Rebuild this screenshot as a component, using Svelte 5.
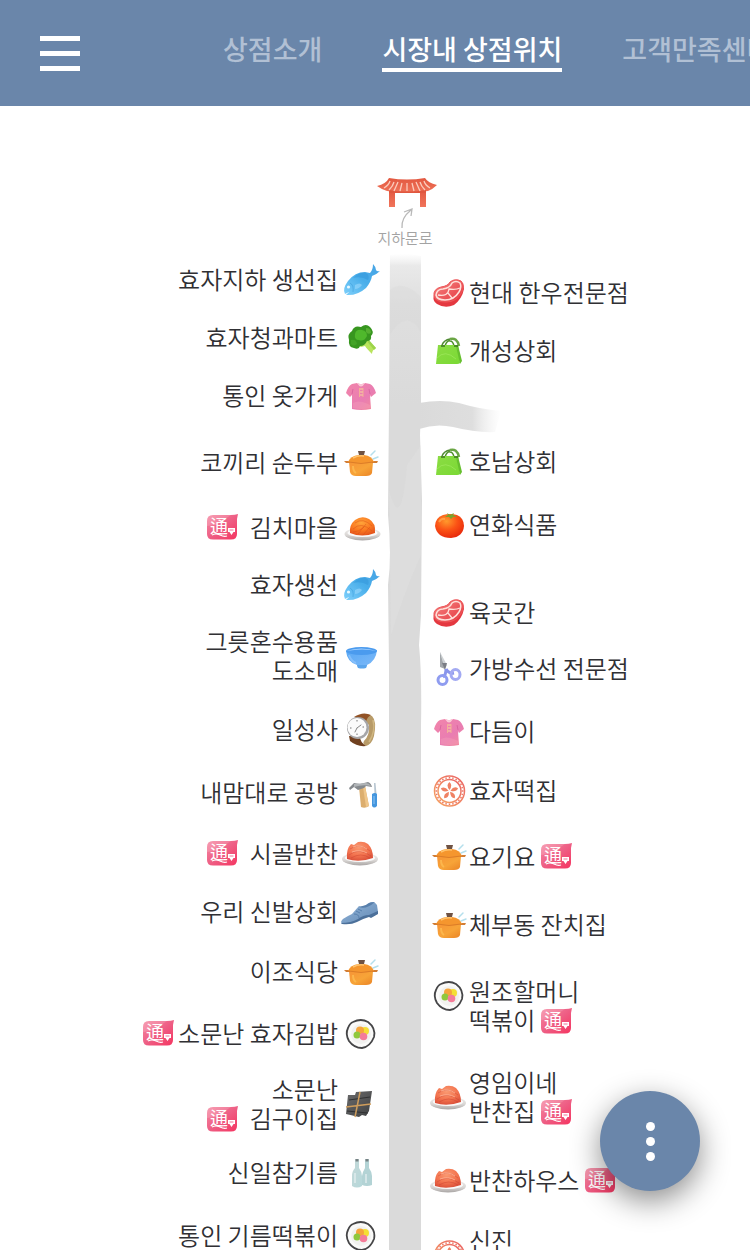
<script>
  const tabs = [
    { label: '상점소개', active: false },
    { label: '시장내 상점위치', active: true },
    { label: '고객만족센터', active: false }
  ];

  // y is the centre of each shop on the map, measured from the map's top edge
  const west = [
    { y: 174, icon: 'fish', lines: ['효자지하 생선집'] },
    { y: 232, icon: 'broccoli', lines: ['효자청과마트'] },
    { y: 290, icon: 'shirt', lines: ['통인 옷가게'] },
    { y: 357, icon: 'pot', lines: ['코끼리 순두부'] },
    { y: 422, icon: 'kimchi', lines: ['김치마을'], coin: true },
    { y: 479, icon: 'fish', lines: ['효자생선'] },
    { y: 551, icon: 'bowl', lines: ['그릇혼수용품', '도소매'] },
    { y: 624, icon: 'watch', lines: ['일성사'] },
    { y: 687, icon: 'tools', lines: ['내맘대로 공방'] },
    { y: 748, icon: 'banchan', lines: ['시골반찬'], coin: true },
    { y: 806, icon: 'shoe', lines: ['우리 신발상회'] },
    { y: 866, icon: 'pot', lines: ['이조식당'] },
    { y: 928, icon: 'gimbap', lines: ['소문난 효자김밥'], coin: true, tight: true },
    { y: 999, icon: 'seaweed', lines: ['소문난', '김구이집'], coin: true },
    { y: 1067, icon: 'bottles', lines: ['신일참기름'] },
    { y: 1130, icon: 'gimbap', lines: ['통인 기름떡볶이'] }
  ];

  const east = [
    { y: 187, icon: 'meat', lines: ['현대 한우전문점'] },
    { y: 245, icon: 'bag', lines: ['개성상회'] },
    { y: 356, icon: 'bag', lines: ['호남상회'] },
    { y: 419, icon: 'tomato', lines: ['연화식품'] },
    { y: 507, icon: 'meat', lines: ['육곳간'] },
    { y: 563, icon: 'scissors', lines: ['가방수선 전문점'] },
    { y: 626, icon: 'shirt', lines: ['다듬이'] },
    { y: 685, icon: 'ricecake', lines: ['효자떡집'] },
    { y: 751, icon: 'pot', lines: ['요기요'], coin: true },
    { y: 819, icon: 'pot', lines: ['체부동 잔치집'] },
    { y: 901, icon: 'gimbap', lines: ['원조할머니', '떡볶이'], coin: true, top: true },
    { y: 992, icon: 'banchan', lines: ['영임이네', '반찬집'], coin: true },
    { y: 1075, icon: 'banchan', lines: ['반찬하우스'], coin: true },
    { y: 1150, icon: 'ricecake', lines: ['신진', '떡집'] }
  ];

  const stitches = Array.from({ length: 24 }, (_, i) => i * 15);
  const petals = [0, 72, 144, 216, 288];
</script>

{#snippet coinBadge()}
  <svg class="coin" viewBox="0 0 31 26" role="img" aria-label="통인시장 엽전 가맹점">
    <path d="M6 1H24Q28 1 31 0L30 5V20Q30 25.500 24 25.500H6Q0 25.500 0 20V7Q0 1 6 1Z" fill="url(#g-coin)" />
    <path d="M0 12V7Q0 1 6 1H24L9 11Z" fill="#fff" opacity=".16" />
    <text x="3" y="19" class="coin-text">通</text>
    <path d="M21 14H28V18H26.500L24.500 21L22.500 18H21Z" fill="#fff" />
    <path d="M22.500 16H26.500" stroke="#ef4f7c" stroke-width=".8" />
    <path d="M5 21Q9 19 13 21T20 22" fill="none" stroke="#fff" stroke-width="1.200" />
  </svg>
{/snippet}

{#snippet shop(item)}
  <li class="pin" class:tight={item.tight} class:top={item.top} style:top="{item.y}px">
    <svg class="icon" viewBox="0 0 40 40" aria-hidden="true"><use href="#i-{item.icon}" /></svg>
    <span class="name">
      {#each item.lines as line, i}
        <span class="line">
          <span>{line}</span>
          {#if item.coin && i === item.lines.length - 1}{@render coinBadge()}{/if}
        </span>
      {/each}
    </span>
  </li>
{/snippet}

<svg class="defs" aria-hidden="true">
  <defs>
    <linearGradient id="g-coin" x1="0" y1="0" x2="1" y2="1"><stop stop-color="#f68aa3" /><stop offset=".5" stop-color="#ee5f85" /><stop offset="1" stop-color="#f5335f" /></linearGradient>
    <linearGradient id="g-gate" x1="0" y1="0" x2="0" y2="1"><stop stop-color="#e2573f" /><stop offset="1" stop-color="#f0745a" /></linearGradient>
    <linearGradient id="g-fish" x1="1" y1="0" x2="0" y2="1"><stop stop-color="#48a3e4" /><stop offset=".5" stop-color="#49aeea" /><stop offset="1" stop-color="#7fd0fb" /></linearGradient>
    <linearGradient id="g-shirt" x1="0" y1="0" x2="1" y2="1"><stop stop-color="#f285aa" /><stop offset=".6" stop-color="#e97db2" /><stop offset="1" stop-color="#f58c98" /></linearGradient>
    <linearGradient id="g-pot" x1="0" y1="0" x2="1" y2="1"><stop stop-color="#f79436" /><stop offset=".55" stop-color="#f7a438" /><stop offset="1" stop-color="#ea8325" /></linearGradient>
    <radialGradient id="g-kimchi" cx=".45" cy=".3" r=".7"><stop stop-color="#ffa53a" /><stop offset=".6" stop-color="#fa7920" /><stop offset="1" stop-color="#e5561c" /></radialGradient>
    <radialGradient id="g-banchan" cx=".45" cy=".3" r=".7"><stop stop-color="#fa9a72" /><stop offset=".6" stop-color="#f3744f" /><stop offset="1" stop-color="#dc533b" /></radialGradient>
    <linearGradient id="g-plate" x1="0" y1="0" x2="0" y2="1"><stop stop-color="#f4f2f0" /><stop offset=".6" stop-color="#d9d6d4" /><stop offset="1" stop-color="#a9a5a4" /></linearGradient>
    <linearGradient id="g-bowl" x1="0" y1="0" x2="1" y2="1"><stop stop-color="#5aa9f5" /><stop offset="1" stop-color="#7db9f8" /></linearGradient>
    <radialGradient id="g-tomato" cx=".4" cy=".3" r=".75"><stop stop-color="#ff9a2c" /><stop offset=".5" stop-color="#fb5215" /><stop offset="1" stop-color="#e6260b" /></radialGradient>
    <linearGradient id="g-bag" x1="0" y1="0" x2="1" y2="1"><stop stop-color="#8cdc44" /><stop offset="1" stop-color="#7ad934" /></linearGradient>
    <linearGradient id="g-meat" x1="0" y1="0" x2="1" y2="1"><stop stop-color="#f58a86" /><stop offset="1" stop-color="#e5343d" /></linearGradient>
    <linearGradient id="g-rice" x1="0" y1="1" x2="1" y2="0"><stop stop-color="#f6a560" /><stop offset="1" stop-color="#ea6266" /></linearGradient>
    <linearGradient id="g-shoe" x1="0" y1="0" x2="1" y2="1"><stop stop-color="#93b6da" /><stop offset="1" stop-color="#6389b4" /></linearGradient>
    <linearGradient id="g-bottle" x1="0" y1="0" x2="1" y2="1"><stop stop-color="#c4d8d8" /><stop offset="1" stop-color="#b6d8da" /></linearGradient>
    <linearGradient id="g-black" x1="0" y1="0" x2="1" y2="1"><stop stop-color="#6b6b6c" /><stop offset="1" stop-color="#3f4041" /></linearGradient>
    <linearGradient id="g-road" x1="0" y1="0" x2="0" y2="1"><stop stop-color="#eee" stop-opacity="0" /><stop offset=".012" stop-color="#e9e9e9" /><stop offset=".05" stop-color="#dfdfdf" /><stop offset=".15" stop-color="#dadada" /><stop offset="1" stop-color="#dadada" /></linearGradient>
    <linearGradient id="g-branch" x1="0" y1="0" x2="1" y2="0"><stop stop-color="#dadada" /><stop offset=".65" stop-color="#dedede" /><stop offset="1" stop-color="#ececec" stop-opacity="0" /></linearGradient>
  </defs>

  <symbol id="i-fish" viewBox="0 0 40 40">
    <path d="M4 34Q1 29 7 21Q14 12 24 12L29 13Q32 10 32 4Q35 7 35 10Q36 12 39 11Q35 15 31 16Q30 22 25 28Q16 36 5 35L8 32Z" fill="url(#g-fish)" />
    <path d="M12 18Q18 12 25 13Q29 15 27 20Q20 16 12 18Z" fill="#2f93d8" opacity=".45" />
    <path d="M9 23Q13 25 12 32" fill="none" stroke="#2d8fd3" stroke-width="1" opacity=".4" />
    <path d="M14 25Q19 22 21 25Q18 29 14 29Z" fill="#a9e0ff" opacity=".5" />
    <circle cx="7.500" cy="27" r="1.600" fill="#e9f9ff" />
  </symbol>

  <symbol id="i-broccoli" viewBox="0 0 40 40">
    <path d="M18 24L24 19Q27 18 28 23L35 30Q31 32 31 36Q26 31 24 28L20 29Q16 28 18 24Z" fill="#b9e45d" />
    <path d="M25 22L33 32L35 30L28 22Z" fill="#9cd44a" />
    <path d="M8 22Q6 16 11 13Q13 7 20 9Q25 5 29 9Q34 14 30 18Q31 23 26 23Q24 28 19 28Q18 32 13 30Q7 29 8 22Z" fill="#37961f" />
    <path d="M14 16Q15 11 21 12Q26 13 26 18Q23 24 18 22Q13 22 14 16Z" fill="#4fb82c" />
    <path d="M25 10Q30 10 30 15Q27 17 25 14Z" fill="#56b032" /><path d="M10 22Q15 21 16 26Q12 29 10 26Z" fill="#43a327" />
  </symbol>

  <symbol id="i-shirt" viewBox="0 0 40 40">
    <path d="M11 8L16 7Q20 10 24 7L29 8Q33 10 35 17L30 21L29 19L30 33Q20 35 11 33L11 19L9 21L5 17Q7 10 11 8Z" fill="url(#g-shirt)" />
    <path d="M16 7Q20 14 24 7L22 7Q20 10 18 7Z" fill="#fbc8d6" />
    <path d="M11 18L12 13M29 18L28 13" stroke="#d55f9b" stroke-width=".8" />
    <path d="M19 13H22M19 16H22M19 19H22" stroke="#f8d4a0" stroke-width="1" /><path d="M18.500 12V21M22 12V21" stroke="#f5bd8f" stroke-width=".8" />
    <path d="M12 27Q18 23 29 29V32Q20 34 12 32Z" fill="#f6a0b8" opacity=".4" />
  </symbol>

  <symbol id="i-pot" viewBox="0 0 40 40">
    <path d="M30 12L34 8M32 16L37 14" stroke="#b4dfec" stroke-width="1.500" stroke-linecap="round" />
    <path d="M8 19H32L31 30Q30 33 25 33H15Q10 33 9 29Z" fill="url(#g-pot)" />
    <path d="M3 18H9V20H5ZM31 18H37L36 20H31Z" fill="#d27d34" />
    <path d="M7 19Q9 13 18 12H23Q31 13 33 19Q20 22 7 19Z" fill="#f5962e" />
    <path d="M8 19Q20 22 32 19" fill="none" stroke="#dc7d28" stroke-width="1" />
    <path d="M12 15Q17 12 23 13" fill="none" stroke="#ffc36c" stroke-width="1.500" />
    <path d="M17 8H24L23 12H18Z" fill="#6f5243" />
    <path d="M12 23Q12 28 15 30" fill="none" stroke="#ffc65a" stroke-width="2" opacity=".6" />
  </symbol>

  <symbol id="i-kimchi" viewBox="0 0 40 40">
    <ellipse cx="21.500" cy="26" rx="18" ry="6.500" fill="url(#g-plate)" /><ellipse cx="21.500" cy="25" rx="15" ry="4" fill="#fafafa" />
    <path d="M9 25Q8 17 14 12Q21 7 28 11Q35 15 34 25Q21 30 9 25Z" fill="url(#g-kimchi)" />
    <path d="M14 15Q22 9 31 18M12 21Q20 13 31 23M17 26L25 16M22 27L29 19M12 24Q18 24 23 19" fill="none" stroke="#d94b14" stroke-width="1" opacity=".45" />
  </symbol>

  <symbol id="i-banchan" viewBox="0 0 40 40">
    <ellipse cx="19" cy="25" rx="18" ry="6.500" fill="url(#g-plate)" /><ellipse cx="19" cy="24" rx="15" ry="4" fill="#fafafa" />
    <path d="M6 25Q5 15 10 10L13 11L17 8Q23 7 27 10Q32 15 32 24Q18 29 6 25Z" fill="url(#g-banchan)" />
    <path d="M9 15Q19 8 29 17M8 21Q18 13 30 22M10 24Q20 18 29 24" fill="none" stroke="#c93d2c" stroke-width="1" opacity=".4" />
    <path d="M12 13Q19 10 26 15M11 18Q19 15 26 19" fill="none" stroke="#ffb698" stroke-width="1" opacity=".8" />
  </symbol>

  <symbol id="i-bowl" viewBox="0 0 40 40">
    <path d="M5 14Q6 25 16 28L17 31H25L26 28Q35 24 36 13Z" fill="url(#g-bowl)" />
    <path d="M16 28H26L25 31Q21 32 17 31Z" fill="#5ba5ec" />
    <ellipse cx="20.500" cy="14" rx="15.500" ry="4" fill="#4b9bee" /><path d="M5 14Q20 9 36 14Q22 11 5 14Z" fill="#a5d1ff" />
    <path d="M8 18Q10 24 15 26" fill="none" stroke="#a3d0ff" stroke-width="2" opacity=".5" />
  </symbol>

  <symbol id="i-watch" viewBox="0 0 40 40">
    <path d="M18 7Q24 2 31 6Q36 11 33 26Q31 34 25 36Q21 34 23 31Q29 25 28 15Z" fill="#b89b68" />
    <path d="M13 7Q22 1 30 5Q26 7 25 12Z" fill="#925326" /><path d="M8 26L19 27Q19 32 25 36Q16 37 9 31Z" fill="#70401f" />
    <path d="M32 10Q35 21 28 32" fill="none" stroke="#d0b782" stroke-width="1.500" />
    <circle cx="17" cy="18" r="11" fill="#a6a6a8" /><circle cx="16" cy="17.500" r="9.500" fill="#fbfbfb" />
    <path d="M16 10V11.500M9 18H10.500M21.500 17H23M16 23.500V25" stroke="#777" stroke-width="1" /><path d="M16 18L20 15M16 18L14 22" stroke="#888" stroke-width="1" stroke-linecap="round" />
  </symbol>

  <symbol id="i-tools" viewBox="0 0 40 40">
    <path d="M18 14L24 13L28 33Q24 36 20 34Z" fill="#dcae6e" /><path d="M22 14L24 13L28 33L25 34Z" fill="#efc68a" />
    <path d="M8 15L13 10L19 11L27 9Q30 10 31 14L25 13L23 15L17 17L13 14L9 17Z" fill="#85898d" /><path d="M13 11L25 10Q28 10 30 13Q22 11 13 14Z" fill="#b0b4b7" />
    <path d="M33 10H34.500L35.500 21H33.500Z" fill="#b7c5d0" /><path d="M31 21Q34 19 36 21V33Q33 36 31 33Z" fill="#4496de" /><path d="M33 23V31" stroke="#8dc4f4" stroke-width="1" />
  </symbol>

  <symbol id="i-shoe" viewBox="0 0 40 40">
    <path d="M0 30Q0 27 11 22L18 14Q22 16 28 11Q33 8 36 13L37 20Q36 23 30 25L28 24Q21 25 16 29Q10 32 1 32Z" fill="url(#g-shoe)" />
    <path d="M0 31Q10 31 17 27Q22 23 28 23L37 19V22L30 26L28 25Q21 27 16 30Q10 33 1 32Z" fill="#4c709a" />
    <path d="M18 15Q25 18 34 10Q28 10 25 13Z" fill="#587fab" /><path d="M13 22Q18 22 18 26M15 19L19 21M17 17L21 19" fill="none" stroke="#5880ad" stroke-width="1" />
  </symbol>

  <symbol id="i-gimbap" viewBox="0 0 40 40">
    <path d="M12 8Q20 4 27 8Q35 14 33 23Q29 33 21 34Q13 34 8 27Q4 20 7 14Q9 9 12 8Z" fill="#fafaf9" stroke="#454547" stroke-width="1.800" />
    <circle cx="20" cy="20" r="10" fill="#f1f1ef" />
    <circle cx="24" cy="17" r="4" fill="#f4df34" /><circle cx="19" cy="16.500" r="4" fill="#f5a43c" /><circle cx="16" cy="21" r="3.500" fill="#8fc83d" /><circle cx="22.500" cy="22.500" r="3.800" fill="#f47c99" />
  </symbol>

  <symbol id="i-seaweed" viewBox="0 0 40 40">
    <path d="M7 10L14 10L15 7L31 6L28 26L25 31L21 30L18 32L5 29Z" fill="url(#g-black)" />
    <path d="M8 15L29 12M6 26L27 28" stroke="#303132" stroke-width="1" />
    <path d="M5 22L30 19M19 7L14 32" fill="none" stroke="#cf9d5c" stroke-width="1.500" />
  </symbol>

  <symbol id="i-bottles" viewBox="0 0 40 40">
    <path d="M24 6H28V15Q31 19 31 23V32Q26 34 21 32V23Q22 18 24 15Z" fill="#b3d3d5" />
    <path d="M14 6H18V15Q21 19 21 23V33Q16 36 11 33V23Q11 18 14 15Z" fill="url(#g-bottle)" />
    <path d="M14.500 6H17.500V8.500H14.500ZM24.500 6H27.500V8.500H24.500Z" fill="#788183" /><path d="M14 20V30M25 21V30" stroke="#dfeced" stroke-width="1.500" />
  </symbol>

  <symbol id="i-meat" viewBox="0 0 40 40">
    <path d="M5 22Q3 28 8 31Q16 36 25 32Q33 26 35 16L34 10Z" fill="#e43840" />
    <path d="M5 23Q4 16 12 14Q19 13 21 9Q26 5 32 8Q36 12 33 19Q28 29 17 29Q6 29 5 23Z" fill="url(#g-meat)" stroke="#ee5558" stroke-width="1" />
    <path d="M7 22Q8 16 14 16Q21 15 23 10Q27 7 31 10Q33 14 30 19Q25 27 16 27Q8 27 7 22Z" fill="none" stroke="#ffe0da" stroke-width="1.500" />
    <path d="M9 22Q19 24 20 16Q27 17 31 15M19 20L23 25" fill="none" stroke="#ffe0da" stroke-width="1.300" />
  </symbol>

  <symbol id="i-bag" viewBox="0 0 40 40">
    <path d="M16 15Q18 9 21 10Q24 10 25 15" fill="none" stroke="#4c8f27" stroke-width="1.500" />
    <path d="M21 8Q28 6 30 15" fill="none" stroke="#6aa544" stroke-width="2.500" /><path d="M13 14Q15 9 21 8" fill="none" stroke="#4f8a32" stroke-width="1.500" />
    <path d="M9 14L29 14L31 32Q30 33 28 33H7Z" fill="url(#g-bag)" /><path d="M29 14L33 30L31 33L27 15Z" fill="#66bf2e" />
    <path d="M8 27Q16 18 27 28" fill="none" stroke="#acf06b" stroke-width="1" opacity=".5" /><path d="M12 15H16M25 15H29" stroke="#3d751f" stroke-width="1.500" />
  </symbol>

  <symbol id="i-tomato" viewBox="0 0 40 40">
    <path d="M6 21Q6 13 14 10Q21 8 28 10Q35 13 35 21Q34 32 22 33Q8 33 6 21Z" fill="url(#g-tomato)" />
    <path d="M20 12L16 12L19 10L18 8L21 10L25 8L24 10L28 12L24 12L22 14Z" fill="#7aa32c" /><path d="M10 17Q12 13 16 14" fill="none" stroke="#ffc46a" stroke-width="2" opacity=".5" />
  </symbol>

  <symbol id="i-scissors" viewBox="0 0 40 40">
    <path d="M11 3L18 16L16 20Z" fill="#ced2d5" /><path d="M11 3L16 20L11 18Z" fill="#a3a7ab" /><path d="M13 14L18 14L16 21Z" fill="#7b7e85" />
    <path d="M17 20Q17 26 14 28M17 20Q20 25 25 24" fill="none" stroke="#8995eb" stroke-width="3" />
    <circle cx="13.500" cy="31" r="4.500" fill="none" stroke="#8f9cf0" stroke-width="3" /><ellipse cx="26.500" cy="25.500" rx="4.500" ry="5" fill="none" stroke="#a3aaf2" stroke-width="3" />
  </symbol>

  <symbol id="i-ricecake" viewBox="0 0 40 40">
    <circle cx="20.500" cy="20" r="15" fill="none" stroke="url(#g-rice)" stroke-width="1.500" /><circle cx="20.500" cy="20" r="11.500" fill="none" stroke="url(#g-rice)" stroke-width="1.500" />
    {#each stitches as a}<path d="M20.500 7.500V6" stroke="#ed7967" stroke-width="1.500" transform="rotate({a} 20.500 20)" />{/each}
    {#each petals as a}<path d="M20.500 19Q16.500 14 20.500 11Q24 14 20.500 19Z" fill="#ef8163" transform="rotate({a} 20.500 20)" />{/each}
  </symbol>
</svg>

<div class="app">
  <header class="bar">
    <button class="menu" type="button" aria-label="메뉴"><span></span><span></span><span></span></button>
    <nav class="tabs">
      {#each tabs as tab}
        <a href="#top" class:active={tab.active} aria-current={tab.active ? 'page' : undefined}>{tab.label}</a>
      {/each}
    </nav>
  </header>

  <main class="scroll">
    <div class="map">
      <ul class="side west">{#each west as item}{@render shop(item)}{/each}</ul>

      <div class="street">
        <svg class="gate" viewBox="0 0 60 52" aria-hidden="true">
          <path d="M12 12H18V30H12ZM43 12H49V30H43Z" fill="url(#g-gate)" />
          <path d="M12 1Q30 4 48 1Q51 6 60 8Q56 12 51 14Q30 17 10 14Q4 12 0 9Q9 7 12 1Z" fill="url(#g-gate)" />
          <path d="M12 13Q30 16 49 13V16H12Z" fill="#e0573f" />
          <path d="M13 4Q12 8 7 11M17 5Q16 9 12 13M21 5L17 14M25 6L23 14M30 6V14M35 6L37 14M39 5L43 14M43 5Q44 9 48 13M47 4Q48 8 53 11" fill="none" stroke="#fbcabb" stroke-width="1.300" />
          <path d="M25 51Q24 41 34 33M27 35L35 32L34 39" fill="none" stroke="#b9b9b9" stroke-width="1.300" />
        </svg>
        <span class="road-name">지하문로</span>
        <svg class="road" viewBox="0 0 120 1000" aria-hidden="true">
          <path d="M9 0Q25 -3 40 1V152L39 180L41 245L40 360L38 390Q41 420 40 470V1000H8V410L7 330Q11 300 7 260L8 150Z" fill="url(#g-road)" />
          <path d="M9 35Q22 24 40 42V78Q26 52 9 80Z" fill="#d3d3d3" opacity=".2" />
          <path d="M8 235Q20 280 26 210L40 190V300Q26 330 10 380Z" fill="#e3e3e3" opacity=".35" />
          <path d="M38 148Q60 144 78 148Q98 154 120 156L114 177Q96 178 72 172Q55 168 38 174Z" fill="url(#g-branch)" />
        </svg>
      </div>

      <ul class="side east">{#each east as item}{@render shop(item)}{/each}</ul>
    </div>
  </main>

  <button class="more" type="button" aria-label="더보기"><span></span><span></span><span></span></button>
</div>

<style>
  :global(body) {
    margin: 0;
    background: #fff;
  }

  .app {
    display: flex;
    flex-direction: column;
    height: 100vh;
    overflow: hidden;
    font-family: 'Noto Sans CJK KR', sans-serif;
    color: #303034;
  }

  .defs {
    position: absolute;
    width: 0;
    height: 0;
  }

  .bar {
    flex: none;
    display: flex;
    align-items: center;
    gap: 143px;
    height: 106px;
    padding-left: 40px;
    background: #6a86aa;
  }

  button {
    border: 0;
    padding: 0;
    cursor: pointer;
  }

  .menu {
    flex: none;
    display: flex;
    flex-direction: column;
    gap: 10px;
    width: 40px;
    background: none;
  }

  .menu span {
    height: 5px;
    background: #fff;
  }

  .tabs {
    flex: 1;
    display: flex;
    gap: 60px;
    min-width: 0;
    overflow: hidden;
  }

  .tabs a {
    flex: none;
    padding-bottom: 4px;
    border-bottom: 4px solid transparent;
    color: #b1c0d4;
    font-size: 27px;
    font-weight: 500;
    line-height: 30px;
    text-decoration: none;
  }

  .tabs a.active {
    border-color: #fff;
    color: #fff;
  }

  .scroll {
    flex: 1;
    min-height: 0;
    overflow: hidden auto;
    scrollbar-width: none;
  }

  .map {
    display: grid;
    grid-template-columns: 381fr 48px 321fr;
    min-height: 1200px;
    overflow: hidden;
  }

  .side {
    position: relative;
    margin: 0;
    padding: 0;
    list-style: none;
  }

  .pin {
    position: absolute;
    display: flex;
    align-items: center;
    transform: translateY(-50%);
    white-space: nowrap;
  }

  .pin.top {
    align-items: flex-start;
  }

  .west .pin {
    right: 0;
    flex-direction: row-reverse;
    gap: 3px;
  }

  .east .pin {
    left: 0;
  }

  .icon {
    flex: none;
    width: 40px;
    height: 40px;
  }

  .name {
    display: flex;
    flex-direction: column;
    padding-bottom: 4px;
    font-size: 24px;
    font-weight: 350;
    line-height: 29px;
  }

  .west .name {
    align-items: flex-end;
  }

  .line {
    display: flex;
    align-items: center;
    gap: 6px;
  }

  .west .line {
    flex-direction: row-reverse;
    gap: 12px;
  }

  .west .tight .line {
    gap: 4px;
  }

  .coin {
    width: 31px;
    height: 26px;
    margin-top: 2px;
  }

  .coin-text {
    fill: #fff;
    font-size: 18px;
    font-weight: 400;
  }

  .street {
    display: flex;
    flex-direction: column;
    align-items: center;
    padding-top: 71px;
  }

  .gate {
    flex: none;
    width: 60px;
    height: 52px;
    margin-left: 4px;
  }

  .road-name {
    color: #a3a3a3;
    font-size: 15px;
    font-weight: 350;
    line-height: 18px;
    white-space: nowrap;
  }

  .road {
    flex: none;
    align-self: flex-start;
    width: 120px;
    height: 1000px;
    margin-top: 8px;
    overflow: visible;
  }

  .more {
    position: fixed;
    right: 50px;
    bottom: 59px;
    display: flex;
    flex-direction: column;
    align-items: center;
    justify-content: center;
    gap: 6px;
    width: 100px;
    height: 100px;
    border-radius: 50%;
    background: #6a86aa;
    box-shadow: 0 10px 30px rgba(0, 0, 0, 0.45);
  }

  .more span {
    width: 9px;
    height: 9px;
    border-radius: 50%;
    background: #fff;
  }
</style>
